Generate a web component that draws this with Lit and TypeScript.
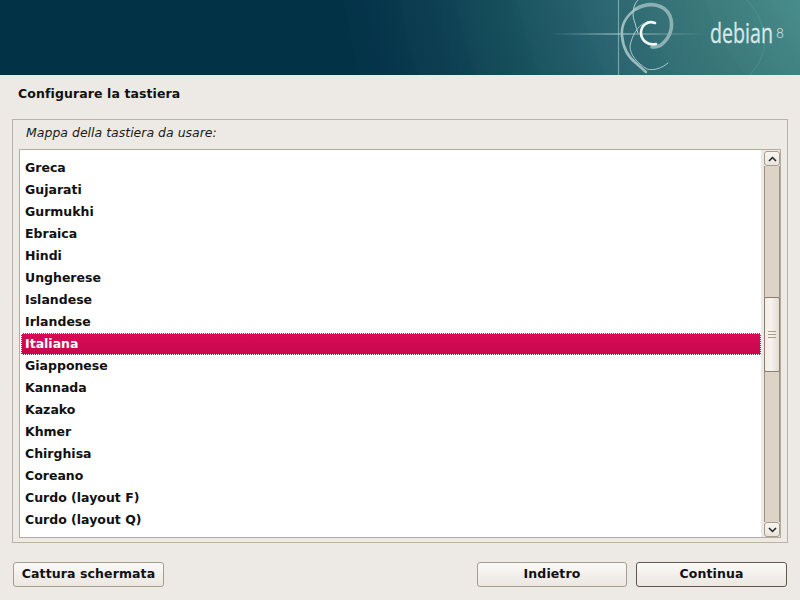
import { LitElement, html, css, svg } from "lit";
import { customElement } from "lit/decorators.js";

const ITEMS = ["Greca","Gujarati","Gurmukhi","Ebraica","Hindi","Ungherese","Islandese","Irlandese","Italiana","Giapponese","Kannada","Kazako","Khmer","Chirghisa","Coreano","Curdo (layout F)","Curdo (layout Q)"];
const RINGS = [585, 530, 470, 410, 350, 290, 230];

@customElement("app-root")
export class AppRoot extends LitElement {
  static styles = css`
    :host { display:flex; flex-direction:column; width:800px; height:600px; background:#edeae5; font-family:"DejaVu Sans",sans-serif; font-size:12.5px; color:#111; overflow:hidden; }
    .banner { height:75px; flex:none; background:#023246; }
    .banner svg { display:block; }
    .brand { font-family:"Open Sans",sans-serif; font-size:27px; fill:#d8e8e8; stroke:#d8e8e8; stroke-width:.3px; }
    .ver { font-family:"Inter",sans-serif; font-size:13px; font-weight:300; fill:#c5dcdc; }
    h1 { margin:0; font-size:12.5px; font-weight:bold; line-height:16px; padding:11px 18px 17px; letter-spacing:.1px; }
    .frame { margin:0 12px; height:424px; box-sizing:border-box; border:1px solid #bcb3a4; padding:5px 6px 4px; display:flex; flex-direction:column; flex:none; }
    .label { font-style:italic; font-size:12.5px; line-height:16px; padding-left:7px; height:24px; color:#1a1a1a; }
    .box { flex:1; min-height:0; display:flex; border:1px solid #b5ac9c; background:#edeae5; }
    .list { flex:1; background:#fff; padding:7px 0 0 1px; overflow:hidden; }
    .row { height:22px; line-height:21px; padding-left:4px; font-weight:bold; box-sizing:border-box; }
    .row.sel { color:#fff; background:linear-gradient(#d90a55,#c5084c); outline:1px dotted #fff; outline-offset:-1px; }
    .sb { width:16px; flex:none; margin:1px 0 0 3px; display:flex; flex-direction:column; }
    .arrow { height:15px; flex:none; box-sizing:border-box; border:1px solid #a89c8b; border-radius:3px; background:linear-gradient(#f8f6f2,#e9e4dd); display:flex; align-items:center; justify-content:center; }
    .track { flex:1; background:#ddd3c6; border-left:1px solid #9c907f; border-right:1px solid #9c907f; display:flex; flex-direction:column; align-items:stretch; }
    .thumb { flex:none; height:75px; margin-top:131px; margin-left:-1px; margin-right:-1px; box-sizing:border-box; border:1px solid #8a7e6d; border-radius:2px; background:linear-gradient(90deg,#f2ede8,#f7f3ef 40%,#e4ddd5); display:flex; align-items:center; justify-content:center; }
    footer { display:flex; padding:19px 13px 0; }
    button { font:bold 12.5px "DejaVu Sans",sans-serif; letter-spacing:.1px; color:#111; width:151px; height:25px; padding:0 0 2px; box-sizing:border-box; border:1px solid #a89c8b; border-radius:3px; background:linear-gradient(#fbf9f7,#ebe7e1); }
    button.first { margin-right:auto; }
    button.back { width:150px; margin-right:9px; }
    button.def { border-color:#5f574c; }
  `;

  render() {
    return html`
      <div class="banner">
        <svg width="800" height="75" viewBox="0 0 800 75">
          <defs>
            <radialGradient id="bg" cx="976" cy="-100" r="640" gradientUnits="userSpaceOnUse">
              <stop offset=".32" stop-color="#3a8584"></stop>
              <stop offset=".47" stop-color="#2f7274"></stop>
              <stop offset=".625" stop-color="#23606d"></stop>
              <stop offset=".765" stop-color="#124a5a"></stop>
              <stop offset=".875" stop-color="#0a3c4e"></stop>
              <stop offset=".973" stop-color="#05344a"></stop>
              <stop offset="1" stop-color="#033447"></stop>
            </radialGradient>
            <linearGradient id="hl" x1="550" x2="705" y1="0" y2="0" gradientUnits="userSpaceOnUse">
              <stop offset="0" stop-color="#b9d3d3" stop-opacity="0"></stop>
              <stop offset=".45" stop-color="#cfe2e2" stop-opacity=".9"></stop>
              <stop offset="1" stop-color="#b9d3d3" stop-opacity="0"></stop>
            </linearGradient>
          </defs>
          <circle cx="976" cy="-100" r="640" fill="url(#bg)"></circle>
          ${RINGS.map(r => svg`<circle cx="976" cy="-100" r=${r} fill="#fff" opacity=".012"></circle>`)}
          <path d="M747 0C768 25 772 50 750 75" stroke="#5d9c9c" stroke-width="1" opacity=".45" fill="none"></path>
          <rect x="550" y="33.5" width="155" height="1" fill="url(#hl)"></rect>
          <path d="M618.5 0V75" stroke="#9dbdbd" stroke-width="1.2" opacity=".7" fill="none"></path>
          <g fill="none" stroke-linecap="round">
            <path d="M636 9C648 2 664 3 670 16C674 27 670 38 661 45C658 47 655 47 652 47" stroke="#8db1b2" stroke-width="3.6"></path>
            <path d="M636 9C626 16 621 26 622 36C623 48 629 58 637 64L646 72" stroke="#9bbcbd" stroke-width="2.6"></path>
            <path d="M655 23C647 20 641 26 641 33C641 40 648 46 656 44" stroke="#f2f8f8" stroke-width="2.6"></path>
            <path d="M638 0C632 6 632 16 635 23C636 27 637 30 638 33" stroke="#b6d0d0" stroke-width="1"></path>
            <path d="M645 23C637 26 632 36 630 46C630 55 637 63 647 69C654 71 662 68 668 63" stroke="#a9c7c7" stroke-width="1"></path>
          </g>
          <text class="brand" transform="translate(710 43) scale(.727 1)">debian</text>
          <text class="ver" x="776" y="38">8</text>
        </svg>
      </div>
      <h1>Configurare la tastiera</h1>
      <div class="frame">
        <div class="label">Mappa della tastiera da usare:</div>
        <div class="box">
          <div class="list">
            ${ITEMS.map(t => html`<div class="row ${t === "Italiana" ? "sel" : ""}">${t}</div>`)}
          </div>
          <div class="sb">
            <div class="arrow"><svg width="9" height="6" viewBox="0 0 9 6"><path d="M1 5L4.5 1.5L8 5" fill="none" stroke="#222" stroke-width="1.5"></path></svg></div>
            <div class="track">
              <div class="thumb"><svg width="8" height="9" viewBox="0 0 8 9"><path d="M0 1.5H8M0 4.5H8M0 7.5H8" stroke="#a89c8b" stroke-width="1"></path></svg></div>
            </div>
            <div class="arrow"><svg width="9" height="6" viewBox="0 0 9 6"><path d="M1 1L4.5 4.5L8 1" fill="none" stroke="#222" stroke-width="1.5"></path></svg></div>
          </div>
        </div>
      </div>
      <footer>
        <button class="first">Cattura schermata</button>
        <button class="back">Indietro</button>
        <button class="def">Continua</button>
      </footer>
    `;
  }
}
